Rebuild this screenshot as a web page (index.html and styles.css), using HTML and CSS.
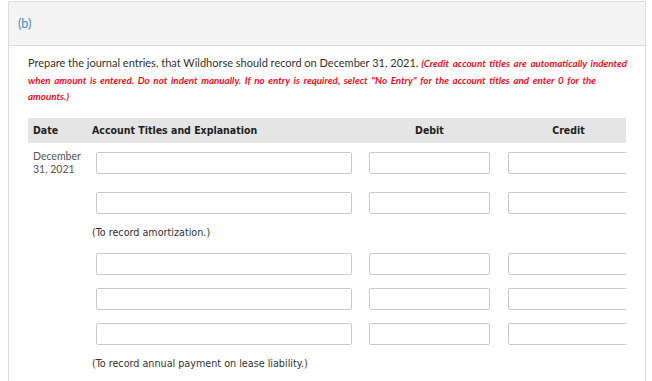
FILE: index.html
```html
<!DOCTYPE html>
<html lang="en">
    <head>
        <meta charset="UTF-8" />
        <meta name="viewport" content="width=device-width, initial-scale=1.0" />
        <title>Journal entries (b)</title>
        <link rel="stylesheet" href="styles.css">
    </head>
    <body>
        <div class="panel">
            <div class="panel-head">(b)</div>

            <div class="panel-body">
                <p class="question">
                    Prepare the journal entries, that Wildhorse should record on December 31, 2021.
                    <em>(Credit account titles are automatically indented when amount is entered. Do not indent manually. If no entry is required, select "No Entry" for the account titles and enter 0 for the amounts.)</em>
                </p>

                <div class="journal">
                    <div class="journal-head">
                        <div class="col-date">Date</div>
                        <div class="col-account">Account Titles and Explanation</div>
                        <div class="col-debit"><span>Debit</span></div>
                        <div class="col-credit"><span>Credit</span></div>
                    </div>

                    <div class="entry first">
                        <div class="col-date date-text">December<br>31, 2021</div>
                        <div class="col-account"><input type="text" /></div>
                        <div class="col-debit"><input type="text" /></div>
                        <div class="col-credit"><input type="text" /></div>
                    </div>
                    <div class="entry">
                        <div class="col-date"></div>
                        <div class="col-account"><input type="text" /></div>
                        <div class="col-debit"><input type="text" /></div>
                        <div class="col-credit"><input type="text" /></div>
                    </div>
                    <div class="explain">(To record amortization.)</div>

                    <div class="entry">
                        <div class="col-date"></div>
                        <div class="col-account"><input type="text" /></div>
                        <div class="col-debit"><input type="text" /></div>
                        <div class="col-credit"><input type="text" /></div>
                    </div>
                    <div class="entry">
                        <div class="col-date"></div>
                        <div class="col-account"><input type="text" /></div>
                        <div class="col-debit"><input type="text" /></div>
                        <div class="col-credit"><input type="text" /></div>
                    </div>
                    <div class="entry">
                        <div class="col-date"></div>
                        <div class="col-account"><input type="text" /></div>
                        <div class="col-debit"><input type="text" /></div>
                        <div class="col-credit"><input type="text" /></div>
                    </div>
                    <div class="explain">(To record annual payment on lease liability.)</div>
                </div>
            </div>
        </div>
    </body>
</html>
```

FILE: styles.css
```css
body {
    margin: 0;
    padding: 1px 0 0 8px;
    background: #fff;
    font-family: Lato, "Open Sans", sans-serif;
    color: #333;
    overflow: hidden;
}

.panel {
    width: 636px;
    height: 380px;
    border: 1px solid #dcdcdc;
    border-bottom: none;
    border-radius: 2px 2px 0 0;
}

.panel-head {
    height: 43px;
    line-height: 43px;
    padding-left: 9px;
    background: #f4f4f4;
    border-bottom: 1px solid #dcdcdc;
    color: #3d8fd6;
    font-size: 12.5px;
}

.panel-body {
    padding: 9px 14px 0 19px;
}

.question {
    margin: 0;
    font-size: 11px;
    line-height: 15.5px;
    color: #333;
}

.question em {
    color: #f0101c;
    font-weight: 700;
    font-size: 9.8px;
    word-spacing: 1.5px;
}

.journal {
    margin-top: 13px;
    width: 598px;
    overflow: hidden;
}

.journal-head,
.entry {
    display: grid;
    grid-template-columns: 64px 277px 139px 118px;
}

.journal-head {
    height: 25px;
    line-height: 25px;
    background: #e5e5e5;
    font-family: "DejaVu Sans Condensed", "Liberation Sans", sans-serif;
    font-weight: 700;
    font-size: 10.5px;
    color: #222;
}

.journal-head .col-date {
    padding-left: 5px;
}

.journal-head .col-debit span,
.journal-head .col-credit span {
    display: block;
    width: 121px;
    text-align: center;
}

.entry {
    margin-top: 13px;
}

.entry.first {
    margin-top: 9px;
}

.entry.first + .entry {
    margin-top: 16px;
}

.date-text {
    margin-top: -2px;
    padding-left: 5px;
    font-size: 10.5px;
    line-height: 13px;
    color: #555;
}

.entry input {
    box-sizing: border-box;
    display: block;
    height: 22px;
    margin: 0;
    padding: 2px 4px;
    border: 1px solid #c9c9c9;
    border-radius: 2px;
    background: #fff;
    font-size: 11px;
}

.col-account input {
    width: 256px;
    margin-left: 4px;
}

.col-debit input,
.col-credit input {
    width: 121px;
}

.explain {
    margin-top: 12px;
    margin-left: 64px;
    line-height: 14px;
    font-family: "DejaVu Sans Condensed", "Liberation Sans", sans-serif;
    font-size: 10.7px;
    color: #333;
}

.explain + .entry {
    margin-top: 13px;
}
```
